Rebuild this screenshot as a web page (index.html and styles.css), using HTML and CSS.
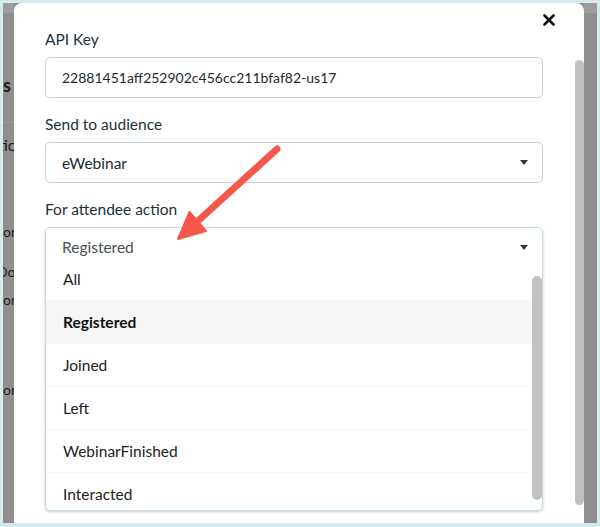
FILE: index.html
```html
<!DOCTYPE html>
<html lang="en">
<head>
  <meta charset="UTF-8" />
  <meta name="viewport" content="width=device-width, initial-scale=1.0"/>
  <title>Mailchimp integration</title>
  <link rel="stylesheet" href="styles.css">
</head>
<body>
  <div class="screen">
    <div class="behind behind-left">
      <div class="behind-band"></div>
      <div class="frag frag-title">s</div>
      <div class="behind-line"></div>
      <div class="frag frag-sub">tio</div>
      <div class="frag frag-small frag-1">on</div>
      <div class="frag frag-small frag-2">Do</div>
      <div class="frag frag-small frag-3">on</div>
      <div class="frag frag-small frag-4">on</div>
    </div>

    <div class="modal">
      <button class="close" aria-label="Close">
        <svg width="12" height="12" viewBox="0 0 12 12">
          <path d="M1.5 1.5 L10.5 10.5 M10.5 1.5 L1.5 10.5" stroke="#151515" stroke-width="2.6" stroke-linecap="round"/>
        </svg>
      </button>

      <div class="modal-body">
        <div class="field">
          <label class="label">API Key</label>
          <div class="input">22881451aff252902c456cc211bfaf82-us17</div>
        </div>

        <div class="field">
          <label class="label">Send to audience</label>
          <div class="input select">
            <span>eWebinar</span>
            <span class="caret"></span>
          </div>
        </div>

        <div class="field">
          <label class="label">For attendee action</label>
          <div class="dropdown">
            <div class="dropdown-head">
              <span>Registered</span>
              <span class="caret"></span>
            </div>
            <div class="menu">
              <div class="menu-items">
                <div class="menu-item">All</div>
                <div class="menu-item selected">Registered</div>
                <div class="menu-item">Joined</div>
                <div class="menu-item">Left</div>
                <div class="menu-item">WebinarFinished</div>
                <div class="menu-item">Interacted</div>
              </div>
              <div class="menu-track"><div class="menu-thumb"></div></div>
            </div>
          </div>
        </div>
      </div>

      <div class="modal-track"><div class="modal-thumb"></div></div>
    </div>

    <div class="behind behind-right">
      <div class="behind-band"></div>
    </div>
  </div>

  <svg class="arrow" width="600" height="527" viewBox="0 0 600 527">
    <line x1="277" y1="149" x2="199" y2="220" stroke="#f5574b" stroke-width="7" stroke-linecap="round"/>
    <polygon points="178,239 189.5,212 206,231" fill="#f5574b" stroke="#f5574b" stroke-width="2" stroke-linejoin="round"/>
  </svg>
</body>
</html>
```

FILE: styles.css
```css
body {
  margin: 0;
  padding: 3px 3px 4px;
  background: #d5ecef;
  font-family: Lato, 'Noto Sans', sans-serif;
  position: relative;
}
.screen {
  display: flex;
  height: 520px;
  background: #8f8f8f;
}
.behind {
  overflow: hidden;
  color: #1c1c1c;
}
.behind-left {
  width: 11px;
}
.behind-right {
  width: 13px;
}
.behind-band {
  height: 10px;
  background: #9d9d9d;
}
.behind-line {
  margin-top: 27px;
  height: 1px;
  background: #9c9c9c;
}
.frag {
  line-height: 20px;
  white-space: nowrap;
}
.frag-title {
  margin-top: 62px;
  font-size: 18px;
  font-weight: bold;
}
.frag-sub {
  margin-top: 12px;
  font-size: 16px;
  text-indent: -5px;
}
.frag-small {
  font-size: 14px;
}
.frag-1 { margin-top: 67px; }
.frag-2 { margin-top: 20px; text-indent: -6px; }
.frag-3 { margin-top: 8px; }
.frag-4 { margin-top: 70px; }

.modal {
  flex: 1;
  display: flex;
  background: #fff;
  border-radius: 8px 8px 0 0;
  position: relative;
}
.close {
  position: absolute;
  top: 11px;
  right: 29px;
  width: 12px;
  height: 12px;
  padding: 0;
  border: none;
  background: none;
  display: flex;
}
.modal-body {
  flex: 1;
  padding: 26px 32px 0 31px;
}
.modal-track {
  width: 9px;
}
.modal-thumb {
  margin-top: 57px;
  height: 445px;
  background: #c1c1c1;
  border-radius: 5px;
}
.field + .field {
  margin-top: 16px;
}
.label {
  display: block;
  font-size: 15.5px;
  line-height: 20px;
  color: #20323a;
  margin-bottom: 8px;
}
.input {
  height: 41px;
  box-sizing: border-box;
  border: 1px solid #c9d2d5;
  border-radius: 5px;
  padding: 0 14px 0 16px;
  display: flex;
  align-items: center;
  justify-content: space-between;
  font-size: 14px;
  color: #1b2b33;
}
.select {
  font-size: 15.5px;
}
.caret {
  width: 0;
  height: 0;
  border-left: 4px solid transparent;
  border-right: 4px solid transparent;
  border-top: 5px solid #2c383e;
}
.dropdown {
  border: 1px solid #c4dce4;
  border-radius: 5px;
  box-shadow: 0 1px 3px rgba(0, 0, 0, 0.2);
  overflow: hidden;
}
.dropdown-head {
  height: 38px;
  padding: 0 14px 0 16px;
  display: flex;
  align-items: center;
  justify-content: space-between;
  font-size: 15.5px;
  color: #4a4f52;
}
.menu {
  height: 244px;
  display: flex;
  overflow: hidden;
}
.menu-items {
  flex: 1;
  margin-top: -8px;
}
.menu-item {
  height: 43px;
  box-sizing: border-box;
  border-bottom: 1px solid #f7f7f7;
  padding-left: 17px;
  display: flex;
  align-items: center;
  font-size: 15.5px;
  color: #222;
}
.menu-item.selected {
  background: #f5f5f5;
  font-weight: bold;
  color: #111;
}
.menu-track {
  width: 10px;
  padding-top: 10px;
}
.menu-thumb {
  height: 224px;
  background: #c1c1c1;
  border-radius: 5px;
}
.arrow {
  position: absolute;
  top: 0;
  left: 0;
  pointer-events: none;
}
```
